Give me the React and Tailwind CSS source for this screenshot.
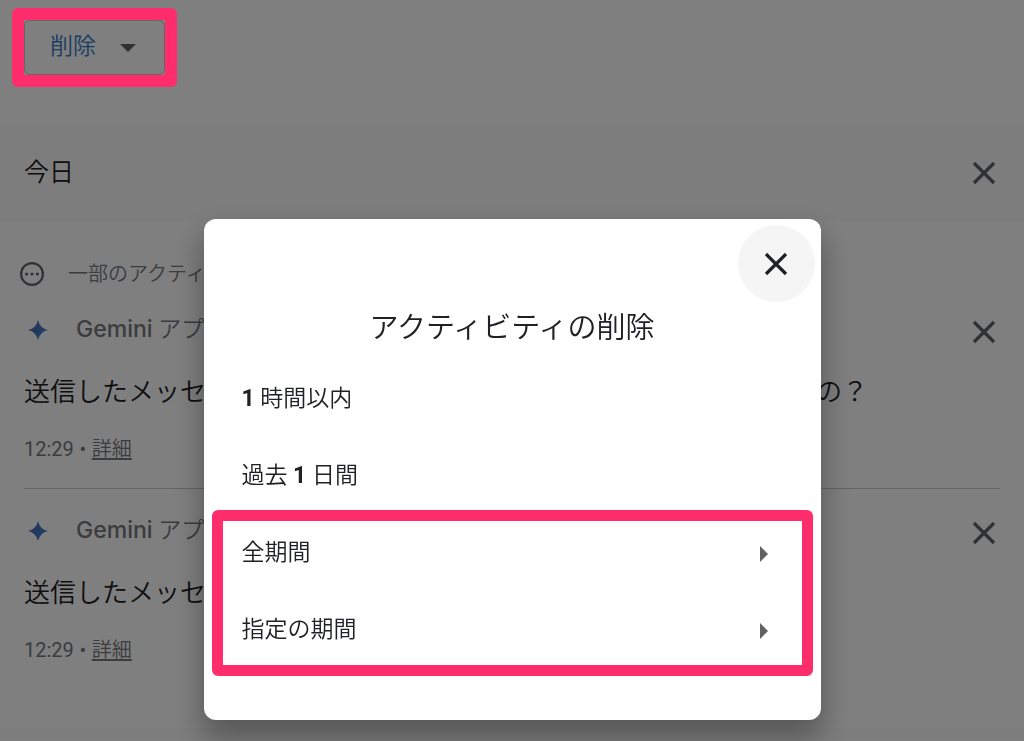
import React from "react";

function CrossIcon({ className }) {
  return (
    <svg viewBox="0 0 24 24" className={className} aria-hidden="true">
      <path d="M2 2 22 22M22 2 2 22" fill="none" stroke="currentColor" strokeWidth="3.2" />
    </svg>
  );
}

function Sparkle() {
  return (
    <svg viewBox="0 0 20 20" className="size-5" aria-hidden="true">
      <defs>
        <linearGradient id="spark" x1="0" y1="0" x2="1" y2="0.6">
          <stop offset="0" stopColor="#7668ad" />
          <stop offset="0.5" stopColor="#4a6fb8" />
          <stop offset="1" stopColor="#2f8fd0" />
        </linearGradient>
      </defs>
      <path d="M10 0Q11.8 8.2 20 10Q11.8 11.8 10 20Q8.2 11.8 0 10Q8.2 8.2 10 0Z" fill="url(#spark)" />
    </svg>
  );
}

function MoreCircle() {
  return (
    <svg viewBox="0 0 24 24" className="size-6" aria-hidden="true">
      <circle cx="12" cy="12" r="10.9" fill="none" stroke="currentColor" strokeWidth="2.2" />
      <circle cx="6.6" cy="12" r="1.6" fill="currentColor" />
      <circle cx="12" cy="12" r="1.6" fill="currentColor" />
      <circle cx="17.4" cy="12" r="1.6" fill="currentColor" />
    </svg>
  );
}

function Activity({ ending, divided }) {
  return (
    <article className={divided ? "mx-6 border-b border-[#c8cacc] pt-4 pb-3.5" : "mx-6 pt-4 pb-3.5"}>
      <div className="flex h-14 items-center">
        <span className="ml-1 flex w-12 shrink-0 pb-1">
          <Sparkle />
        </span>
        <h3 className="grow pb-1 text-[23px] font-[350] text-[#74787c]">
          <span className="font-[Inter] font-medium">Gemini</span> アプ
        </h3>
        <button type="button" aria-label="アクティビティを削除" className="p-1 text-[#5f6368]">
          <CrossIcon className="size-6" />
        </button>
      </div>
      <p className="flex h-16 items-center justify-between pr-[132px] text-[26px] font-[350] text-[#202124]">
        <span>送信したメッセ</span>
        <span>{ending}</span>
      </p>
      <div className="flex h-[50px] items-center text-[20px] font-[350] text-[#74787c]">
        <span className="font-normal">12:29</span>
        <span className="w-[18px] text-center font-normal">•</span>
        <a href="#details" className="underline underline-offset-2">
          詳細
        </a>
      </div>
    </article>
  );
}

function PeriodOption({ children, submenu }) {
  return (
    <li>
      <button
        type="button"
        className="flex h-[77px] w-full items-center justify-between pr-[53px] pl-[38px] text-left text-[23px] font-[350] text-[#202124]"
      >
        <span>{children}</span>
        {submenu && (
          <svg viewBox="0 0 8 16" className="h-4 w-2 text-[#616161]" aria-hidden="true">
            <path d="M0 0 8 8 0 16Z" fill="currentColor" />
          </svg>
        )}
      </button>
    </li>
  );
}

export default function App() {
  return (
    <div className="min-h-screen bg-white font-['Roboto','Noto_Sans_CJK_JP',sans-serif]">
      <main>
        <div className="h-[125px] px-6 pt-5">
          <div className="relative w-fit">
            <button
              type="button"
              className="flex h-[55px] w-[141px] items-center rounded-md border border-[#c8cacc] pl-[25px] text-[23px] font-[350] text-[#3578c4]"
            >
              削除
              <svg viewBox="0 0 16 8" className="ml-6 h-2 w-4 text-[#5f6368]" aria-hidden="true">
                <path d="M0 0H16L8 8Z" fill="currentColor" />
              </svg>
            </button>
            <div className="pointer-events-none absolute -inset-3 z-20 rounded-md border-12 border-[#ff2d6c]" />
          </div>
        </div>

        <header className="flex h-24 items-center justify-between bg-[#fafafa] px-6">
          <h2 className="text-[25px] font-[350] text-[#202124]">今日</h2>
          <button type="button" aria-label="今日のアクティビティを削除" className="p-1 text-[#5f6368]">
            <CrossIcon className="size-6" />
          </button>
        </header>

        <div className="flex h-[67px] items-end pl-5 text-[#5f6368]">
          <div className="flex h-7 items-center">
            <MoreCircle />
            <span className="ml-6 text-[20px] font-[350] text-[#74787c]">一部のアクティ</span>
          </div>
        </div>

        <Activity ending="の？" divided />
        <Activity />
        <div className="mt-[39px] h-3 bg-[#fafafa]" />
      </main>

      <div className="fixed inset-0 z-10 flex items-start justify-center bg-black/50 pt-[219px]">
        <section
          role="dialog"
          aria-modal="true"
          aria-labelledby="dialog-title"
          className="w-full max-w-[617px] rounded-xl bg-white pb-[51px] shadow-[0_16px_30px_2px_rgba(0,0,0,0.32)]"
        >
          <div className="flex justify-end pt-1.5 pr-1.5">
            <button
              type="button"
              aria-label="閉じる"
              className="flex size-[77px] items-center justify-center rounded-full bg-[#f5f5f5] text-[#202124]"
            >
              <CrossIcon className="size-6" />
            </button>
          </div>
          <h1 id="dialog-title" className="h-[59px] text-center text-[29px] leading-[52px] font-[350] text-[#202124]">
            アクティビティの削除
          </h1>
          <ul>
            <PeriodOption>
              <b className="font-bold">1</b> 時間以内
            </PeriodOption>
            <PeriodOption>
              過去 <b className="font-bold">1</b> 日間
            </PeriodOption>
          </ul>
          <div className="relative">
            <ul>
              <PeriodOption submenu>全期間</PeriodOption>
              <PeriodOption submenu>指定の期間</PeriodOption>
            </ul>
            <div className="pointer-events-none absolute inset-x-2 -top-[5px] -bottom-[7px] rounded-md border-[11px] border-[#ff2d6c]" />
          </div>
        </section>
      </div>
    </div>
  );
}
